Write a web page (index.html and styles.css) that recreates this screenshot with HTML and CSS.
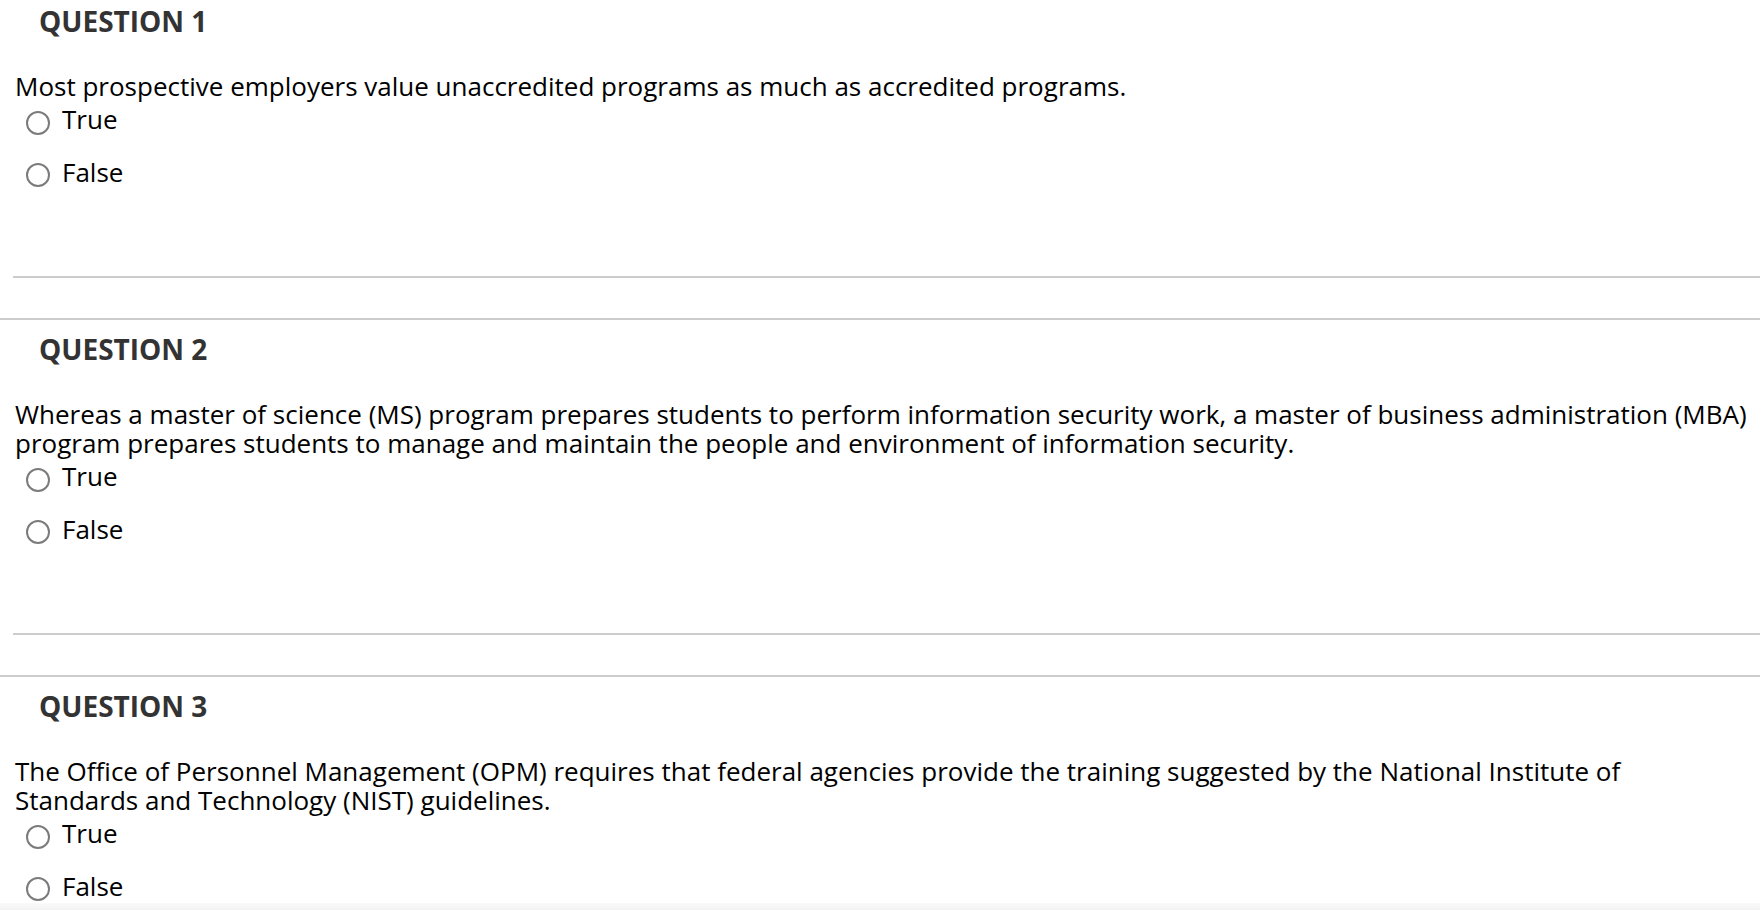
FILE: index.html
```html
<!DOCTYPE html>
<html lang="en">
<head>
<meta charset="utf-8">
<title>Quiz</title>
<link rel="stylesheet" href="styles.css">
</head>
<body>
<main class="quiz">
  <section class="question">
    <div class="question-body">
      <h2 class="question-title">QUESTION 1</h2>
      <p class="question-text">Most prospective employers value unaccredited programs as much as accredited programs.</p>
      <div class="options">
        <label class="option"><input class="radio" type="radio" name="q1"><span>True</span></label>
        <label class="option"><input class="radio" type="radio" name="q1"><span>False</span></label>
      </div>
    </div>
    <div class="question-divider"></div>
  </section>
  <section class="question">
    <div class="question-body">
      <h2 class="question-title">QUESTION 2</h2>
      <p class="question-text">Whereas a master of science (MS) program prepares students to perform information security work, a master of business administration (MBA) program prepares students to manage and maintain the people and environment of information security.</p>
      <div class="options">
        <label class="option"><input class="radio" type="radio" name="q2"><span>True</span></label>
        <label class="option"><input class="radio" type="radio" name="q2"><span>False</span></label>
      </div>
    </div>
    <div class="question-divider"></div>
  </section>
  <section class="question">
    <div class="question-body">
      <h2 class="question-title">QUESTION 3</h2>
      <p class="question-text">The Office of Personnel Management (OPM) requires that federal agencies provide the training suggested by the National Institute of Standards and Technology (NIST) guidelines.</p>
      <div class="options">
        <label class="option"><input class="radio" type="radio" name="q3"><span>True</span></label>
        <label class="option"><input class="radio" type="radio" name="q3"><span>False</span></label>
      </div>
    </div>
    <div class="question-divider"></div>
  </section>
</main>
<div class="bottom-bar"></div>
</body>
</html>
```

FILE: styles.css
```css
html, body {
  margin: 0;
  padding: 0;
  background: #fff;
}

body {
  font-family: "Open Sans", "Liberation Sans", sans-serif;
  color: #000;
  font-size: 26px;
  line-height: 29px;
}

.quiz {
  display: flex;
  flex-direction: column;
}

.question {
  padding-top: 12px;
  border-top: 2px solid #cccccc;
}

.question:first-child {
  padding-top: 4px;
  border-top: none;
}

.question-body {
  padding: 0 12.5px 0 15px;
}

.question-title {
  margin: 0 0 0 24px;
  font-size: 28px;
  line-height: 34px;
  font-weight: 700;
  color: #333333;
}

.question-text {
  margin: 34px 0 0 0;
}

.options {
  display: flex;
  flex-direction: column;
  gap: 23px;
  margin-top: 4px;
}

.option {
  display: flex;
  align-items: flex-start;
  cursor: pointer;
}

.radio {
  -webkit-appearance: none;
  appearance: none;
  flex: none;
  box-sizing: border-box;
  width: 24px;
  height: 24px;
  margin: 5.5px 12.5px 0 10.5px;
  border: 2px solid #7b7b7b;
  border-radius: 50%;
  background: #fff;
}

.question-divider {
  margin: 89px 0 40px 13px;
  border-top: 2px solid #cccccc;
}

.bottom-bar {
  position: fixed;
  left: 0;
  right: 0;
  bottom: 0;
  height: 7px;
  background: linear-gradient(#fafafa, #f3f3f3);
}
```
